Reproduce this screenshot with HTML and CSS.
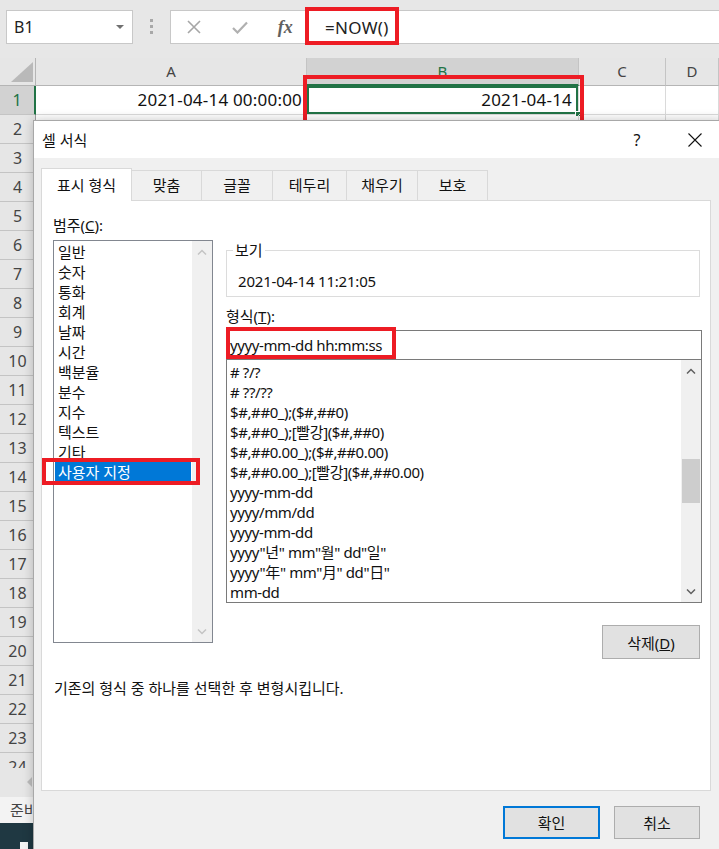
FILE: index.html
```html
<!DOCTYPE html>
<html lang="ko">
<head>
    <meta charset="UTF-8">
    <meta name="viewport" content="width=device-width, initial-scale=1.0">
    <title>셀 서식</title>
    <link rel="stylesheet" href="styles.css">
</head>
<body>
<div class="screen">

    <!-- formula bar -->
    <div class="formula-bar">
        <div class="name-box"><span>B1</span><span class="name-arrow"></span></div>
        <div class="bar-grip"><i></i><i></i><i></i></div>
        <div class="formula-box">
            <div class="formula-icons">
                <span class="f-icon">
                    <svg width="14" height="14" viewBox="0 0 14 14"><path d="M1 1 L13 13 M13 1 L1 13" stroke="#a6a6a6" stroke-width="1.6" fill="none"/></svg>
                </span>
                <span class="f-icon">
                    <svg width="16" height="13" viewBox="0 0 16 13"><path d="M1 7 L5.5 11.5 L15 1.5" stroke="#b0b0b0" stroke-width="2.2" fill="none"/></svg>
                </span>
                <span class="f-icon fx">fx</span>
            </div>
            <div class="formula-text">=NOW()</div>
        </div>
    </div>

    <!-- sheet -->
    <div class="sheet">
        <div class="grid">
            <div class="corner"><svg width="22" height="20" viewBox="0 0 22 20"><path d="M22 0 L22 20 L0 20 Z" fill="#b9b9b9"/></svg></div>
            <div class="col-head">A</div>
            <div class="col-head selected">B</div>
            <div class="col-head">C</div>
            <div class="col-head">D</div>

            <div class="row-head selected">1</div>
            <div class="cell">2021-04-14 00:00:00</div>
            <div class="cell active">2021-04-14<span class="fill-handle"></span></div>
            <div class="cell"></div>
            <div class="cell"></div>

            <div class="row-head">2</div><div class="cell"></div><div class="cell"></div><div class="cell"></div><div class="cell"></div>
            <div class="row-head">3</div><div class="cell"></div><div class="cell"></div><div class="cell"></div><div class="cell"></div>
            <div class="row-head">4</div><div class="cell"></div><div class="cell"></div><div class="cell"></div><div class="cell"></div>
            <div class="row-head">5</div><div class="cell"></div><div class="cell"></div><div class="cell"></div><div class="cell"></div>
            <div class="row-head">6</div><div class="cell"></div><div class="cell"></div><div class="cell"></div><div class="cell"></div>
            <div class="row-head">7</div><div class="cell"></div><div class="cell"></div><div class="cell"></div><div class="cell"></div>
            <div class="row-head">8</div><div class="cell"></div><div class="cell"></div><div class="cell"></div><div class="cell"></div>
            <div class="row-head">9</div><div class="cell"></div><div class="cell"></div><div class="cell"></div><div class="cell"></div>
            <div class="row-head">10</div><div class="cell"></div><div class="cell"></div><div class="cell"></div><div class="cell"></div>
            <div class="row-head">11</div><div class="cell"></div><div class="cell"></div><div class="cell"></div><div class="cell"></div>
            <div class="row-head">12</div><div class="cell"></div><div class="cell"></div><div class="cell"></div><div class="cell"></div>
            <div class="row-head">13</div><div class="cell"></div><div class="cell"></div><div class="cell"></div><div class="cell"></div>
            <div class="row-head">14</div><div class="cell"></div><div class="cell"></div><div class="cell"></div><div class="cell"></div>
            <div class="row-head">15</div><div class="cell"></div><div class="cell"></div><div class="cell"></div><div class="cell"></div>
            <div class="row-head">16</div><div class="cell"></div><div class="cell"></div><div class="cell"></div><div class="cell"></div>
            <div class="row-head">17</div><div class="cell"></div><div class="cell"></div><div class="cell"></div><div class="cell"></div>
            <div class="row-head">18</div><div class="cell"></div><div class="cell"></div><div class="cell"></div><div class="cell"></div>
            <div class="row-head">19</div><div class="cell"></div><div class="cell"></div><div class="cell"></div><div class="cell"></div>
            <div class="row-head">20</div><div class="cell"></div><div class="cell"></div><div class="cell"></div><div class="cell"></div>
            <div class="row-head">21</div><div class="cell"></div><div class="cell"></div><div class="cell"></div><div class="cell"></div>
            <div class="row-head">22</div><div class="cell"></div><div class="cell"></div><div class="cell"></div><div class="cell"></div>
            <div class="row-head">23</div><div class="cell"></div><div class="cell"></div><div class="cell"></div><div class="cell"></div>
            <div class="row-head">24</div><div class="cell"></div><div class="cell"></div><div class="cell"></div><div class="cell"></div>
        </div>
    </div>

    <div class="sheet-tabs"><span class="tab-arrow"></span></div>
    <div class="status-bar">준비</div>
    <div class="taskbar"><span class="task-icon"></span></div>

    <!-- 셀 서식 dialog -->
    <div class="dialog">
        <div class="dlg-title">
            <span class="dlg-name">셀 서식</span>
            <span class="title-btn help">?</span>
            <span class="title-btn close">
                <svg width="14" height="14" viewBox="0 0 14 14"><path d="M0.5 0.5 L13.5 13.5 M13.5 0.5 L0.5 13.5" stroke="#111" stroke-width="1.1" fill="none"/></svg>
            </span>
        </div>

        <div class="dlg-body">
            <div class="tabs">
                <div class="tab active" style="width:91px">표시 형식</div>
                <div class="tab" style="width:70px">맞춤</div>
                <div class="tab" style="width:71px">글꼴</div>
                <div class="tab" style="width:74px">테두리</div>
                <div class="tab" style="width:71px">채우기</div>
                <div class="tab" style="width:70px">보호</div>
            </div>

            <div class="panel">
                <div class="panel-cols">
                    <div class="cat-col">
                        <div class="field-label">범주(<u>C</u>):</div>
                        <div class="listbox cat-list">
                            <div class="list-items">
                                <div class="item">일반</div>
                                <div class="item">숫자</div>
                                <div class="item">통화</div>
                                <div class="item">회계</div>
                                <div class="item">날짜</div>
                                <div class="item">시간</div>
                                <div class="item">백분율</div>
                                <div class="item">분수</div>
                                <div class="item">지수</div>
                                <div class="item">텍스트</div>
                                <div class="item">기타</div>
                                <div class="item selected">사용자 지정</div>
                            </div>
                            <div class="scrollbar disabled">
                                <div class="sb-btn"><svg width="10" height="6" viewBox="0 0 10 6"><path d="M1 5.5 L5 1.5 L9 5.5" fill="none" stroke="currentColor" stroke-width="1.5"/></svg></div>
                                <div class="sb-track"></div>
                                <div class="sb-btn"><svg width="10" height="6" viewBox="0 0 10 6"><path d="M1 0.5 L5 4.5 L9 0.5" fill="none" stroke="currentColor" stroke-width="1.5"/></svg></div>
                            </div>
                        </div>
                    </div>

                    <div class="fmt-col">
                        <fieldset class="preview">
                            <legend>보기</legend>
                            <div class="preview-value">2021-04-14 11:21:05</div>
                        </fieldset>

                        <div class="field-label type-label">형식(<u>T</u>):</div>
                        <div class="fmt-input">yyyy-mm-dd hh:mm:ss</div>

                        <div class="listbox fmt-list">
                            <div class="list-items">
                                <div class="item"># ?/?</div>
                                <div class="item"># ??/??</div>
                                <div class="item">$#,##0_);($#,##0)</div>
                                <div class="item">$#,##0_);[빨강]($#,##0)</div>
                                <div class="item">$#,##0.00_);($#,##0.00)</div>
                                <div class="item">$#,##0.00_);[빨강]($#,##0.00)</div>
                                <div class="item">yyyy-mm-dd</div>
                                <div class="item">yyyy/mm/dd</div>
                                <div class="item">yyyy-mm-dd</div>
                                <div class="item">yyyy"년" mm"월" dd"일"</div>
                                <div class="item">yyyy"年" mm"月" dd"日"</div>
                                <div class="item">mm-dd</div>
                            </div>
                            <div class="scrollbar">
                                <div class="sb-btn"><svg width="10" height="6" viewBox="0 0 10 6"><path d="M1 5.5 L5 1.5 L9 5.5" fill="none" stroke="currentColor" stroke-width="1.5"/></svg></div>
                                <div class="sb-track"><div class="sb-thumb" style="margin-top:78px"></div></div>
                                <div class="sb-btn"><svg width="10" height="6" viewBox="0 0 10 6"><path d="M1 0.5 L5 4.5 L9 0.5" fill="none" stroke="currentColor" stroke-width="1.5"/></svg></div>
                            </div>
                        </div>

                        <button type="button" class="btn delete-btn">삭제(<u>D</u>)</button>
                    </div>
                </div>

                <p class="desc">기존의 형식 중 하나를 선택한 후 변형시킵니다.</p>
            </div>

            <div class="dlg-footer">
                <button type="button" class="btn ok-btn">확인</button>
                <button type="button" class="btn cancel-btn">취소</button>
            </div>
        </div>
    </div>

    <!-- red annotation boxes -->
    <div class="mark mark-formula"></div>
    <div class="mark mark-cell"></div>
    <div class="mark mark-category"></div>
    <div class="mark mark-type"></div>
</div>
</body>
</html>
```

FILE: styles.css
```css
* {
    box-sizing: border-box;
}
body {
    margin: 0;
    font-family: "Noto Sans", "Noto Sans CJK KR", sans-serif;
    color: #000;
    background-color: #fff;
}
.screen {
    position: relative;
    width: 719px;
    height: 849px;
    overflow: hidden;
    background-color: #fff;
}

/* formula bar */
.formula-bar {
    height: 58px;
    background-color: #e7e7e7;
    display: flex;
    align-items: flex-start;
    padding: 10px 0 0 6px;
}
.name-box {
    width: 127px;
    height: 34px;
    background-color: #fff;
    border: 1px solid #c8c8c8;
    display: flex;
    align-items: center;
    justify-content: space-between;
    padding: 0 8px 0 7px;
    font-size: 16px;
    color: #222;
}
.name-arrow {
    width: 0;
    height: 0;
    border-left: 4px solid transparent;
    border-right: 4px solid transparent;
    border-top: 4px solid #707070;
}
.bar-grip {
    width: 37px;
    display: flex;
    flex-direction: column;
    align-items: center;
    gap: 3px;
    padding-top: 9px;
}
.bar-grip i {
    width: 3px;
    height: 3px;
    background-color: #a8a8a8;
}
.formula-box {
    flex: 1;
    height: 34px;
    background-color: #fff;
    border: 1px solid #c8c8c8;
    border-right: none;
    display: flex;
    align-items: center;
}
.formula-icons {
    width: 137px;
    display: flex;
    align-items: center;
}
.f-icon {
    width: 46px;
    display: flex;
    justify-content: center;
    align-items: center;
}
.fx {
    font-family: "Liberation Serif", serif;
    font-style: italic;
    font-weight: bold;
    font-size: 18px;
    color: #606060;
}
.formula-text {
    padding-left: 17px;
    font-size: 17px;
    letter-spacing: 0.3px;
    color: #222;
}

/* sheet grid */
.sheet {
    height: 710px;
    overflow: hidden;
}
.grid {
    display: grid;
    grid-template-columns: 36px 271px 272px 87px 53px;
    grid-template-rows: 28px;
    grid-auto-rows: 29px;
}
.corner {
    background-color: #e6e6e6;
    border-right: 1px solid #b5b5b5;
    border-bottom: 1px solid #b5b5b5;
    display: flex;
    align-items: flex-end;
    justify-content: flex-end;
    padding: 0 2px 3px 0;
}
.col-head {
    background-color: #e6e6e6;
    border-right: 1px solid #c4c4c4;
    border-bottom: 1px solid #b5b5b5;
    text-align: center;
    font-size: 15px;
    line-height: 27px;
    color: #444;
}
.col-head.selected {
    background-color: #d2d2d2;
    color: #217346;
    border-bottom: 2px solid #217346;
}
.row-head {
    background-color: #e6e6e6;
    border-right: 1px solid #9e9e9e;
    border-bottom: 1px solid #c4c4c4;
    text-align: center;
    font-size: 16px;
    line-height: 28px;
    color: #444;
}
.row-head.selected {
    background-color: #d2d2d2;
    color: #217346;
    border-right: 2px solid #217346;
}
.cell {
    position: relative;
    border-right: 1px solid #dadada;
    border-bottom: 1px solid #dadada;
    text-align: right;
    padding-right: 4px;
    font-size: 17px;
    letter-spacing: 0.2px;
    line-height: 28px;
    color: #111;
    white-space: nowrap;
}
.cell.active {
    box-shadow: inset 0 0 0 2px #217346;
    padding-right: 6px;
}
.fill-handle {
    position: absolute;
    right: -3px;
    bottom: -3px;
    width: 6px;
    height: 6px;
    background-color: #217346;
    border: 1px solid #fff;
}
.sheet-tabs {
    height: 29px;
    background-color: #e6e6e6;
    padding: 9px 0 0 27px;
}
.tab-arrow {
    display: block;
    width: 0;
    height: 0;
    border-top: 5px solid transparent;
    border-bottom: 5px solid transparent;
    border-right: 5px solid #bdbdbd;
}
.status-bar {
    height: 26px;
    background-color: #f3f3f3;
    padding-left: 10px;
    font-size: 15px;
    line-height: 26px;
    color: #444;
}
.taskbar {
    height: 26px;
    background-color: #1f3842;
    padding: 19px 0 0 20px;
}
.task-icon {
    display: block;
    width: 8px;
    height: 7px;
    background-color: #f4f4f4;
}

/* dialog */
.dialog {
    position: absolute;
    left: 33px;
    top: 120px;
    width: 690px;
    height: 740px;
    z-index: 2;
    background-color: #f0f0f0;
    border: 1px solid #a8a8a8;
    box-shadow: 0 0 10px rgba(0,0,0,0.22);
    font-size: 15px;
}
.dlg-title {
    height: 37px;
    background-color: #fff;
    display: flex;
    align-items: center;
    padding: 0 12px 0 8px;
}
.dlg-name {
    flex: 1;
    font-size: 15px;
    color: #111;
}
.title-btn {
    width: 30px;
    display: flex;
    justify-content: center;
    align-items: center;
}
.help {
    font-size: 16px;
    color: #111;
    margin-right: 2px;
}
.close {
    margin-left: 26px;
}
.dlg-body {
    padding: 10px 11px 0 7px;
}
.tabs {
    height: 32px;
    display: flex;
    align-items: flex-end;
}
.tab {
    height: 30px;
    border-top: 1px solid #d9d9d9;
    border-right: 1px solid #d9d9d9;
    text-align: center;
    line-height: 28px;
    font-size: 15px;
    color: #111;
}
.tab:first-child {
    border-left: 1px solid #d9d9d9;
}
.tab.active {
    position: relative;
    z-index: 1;
    height: 33px;
    margin-bottom: -1px;
    background-color: #fff;
    line-height: 32px;
}
.panel {
    height: 591px;
    background-color: #fff;
    border: 1px solid #d9d9d9;
    padding: 0 8px 0 11px;
}
.panel-cols {
    display: grid;
    grid-template-columns: 160px 476px;
    column-gap: 13px;
    align-items: start;
}
.field-label {
    margin-top: 14px;
    line-height: 20px;
    color: #111;
}
.listbox {
    display: flex;
    border: 1px solid #828790;
    background-color: #fff;
}
.list-items {
    flex: 1;
    padding-top: 1px;
}
.item {
    height: 20px;
    line-height: 20px;
    padding-left: 4px;
    color: #111;
    white-space: nowrap;
}
.item.selected {
    margin: 0 1px;
    padding-left: 3px;
    background-color: #0078d7;
    color: #fff;
}
.cat-list {
    margin-top: 5px;
    height: 403px;
}
.scrollbar {
    width: 20px;
    background-color: #f0f0f0;
    display: flex;
    flex-direction: column;
    color: #606060;
}
.scrollbar.disabled {
    color: #c4c4c4;
}
.sb-btn {
    height: 21px;
    display: flex;
    align-items: center;
    justify-content: center;
}
.sb-track {
    flex: 1;
    padding: 0 1px;
}
.sb-thumb {
    height: 44px;
    background-color: #cdcdcd;
}
.preview {
    margin: 40px 2px 0 0;
    padding: 0 0 5px 6px;
    border: 1px solid #dcdcdc;
    min-width: 0;
}
.preview legend {
    padding: 0 2px;
    line-height: 18px;
    color: #111;
}
.preview-value {
    margin: 12px 0 0 5px;
    line-height: 20px;
    letter-spacing: -0.2px;
    color: #111;
}
.type-label {
    margin-top: 9px;
}
.fmt-input {
    margin-top: 4px;
    height: 30px;
    border: 1px solid #7a7a7a;
    padding-left: 3px;
    line-height: 28px;
    letter-spacing: -0.4px;
    color: #111;
}
.fmt-list {
    height: 243px;
    border-color: #7a7a7a;
    border-top: none;
}
.fmt-list .list-items {
    padding-top: 2px;
}
.fmt-list .item {
    padding-left: 3px;
    letter-spacing: -0.4px;
}
.btn {
    font-family: "Noto Sans", "Noto Sans CJK KR", sans-serif;
    font-size: 15px;
    color: #111;
    background-color: #e1e1e1;
    border: 1px solid #adadad;
    padding: 0;
}
.delete-btn {
    display: block;
    width: 98px;
    height: 34px;
    margin: 22px 2px 0 auto;
}
.desc {
    margin: 19px 0 0 1px;
    line-height: 20px;
    color: #111;
}
.dlg-footer {
    display: flex;
    justify-content: flex-end;
    gap: 14px;
    padding: 15px 11px 0 0;
}
.ok-btn {
    width: 97px;
    height: 33px;
    border: 2px solid #0078d7;
}
.cancel-btn {
    width: 86px;
    height: 33px;
}

/* red annotation boxes */
.mark {
    position: absolute;
    border: 4px solid #ed1c24;
}
.mark-formula {
    left: 305px;
    top: 7px;
    width: 94px;
    height: 38px;
    z-index: 1;
}
.mark-cell {
    left: 303px;
    top: 75px;
    width: 281px;
    height: 60px;
    z-index: 1;
}
.mark-category {
    left: 42px;
    top: 458px;
    width: 158px;
    height: 27px;
    z-index: 3;
}
.mark-type {
    left: 226px;
    top: 327px;
    width: 170px;
    height: 32px;
    z-index: 3;
}
```
